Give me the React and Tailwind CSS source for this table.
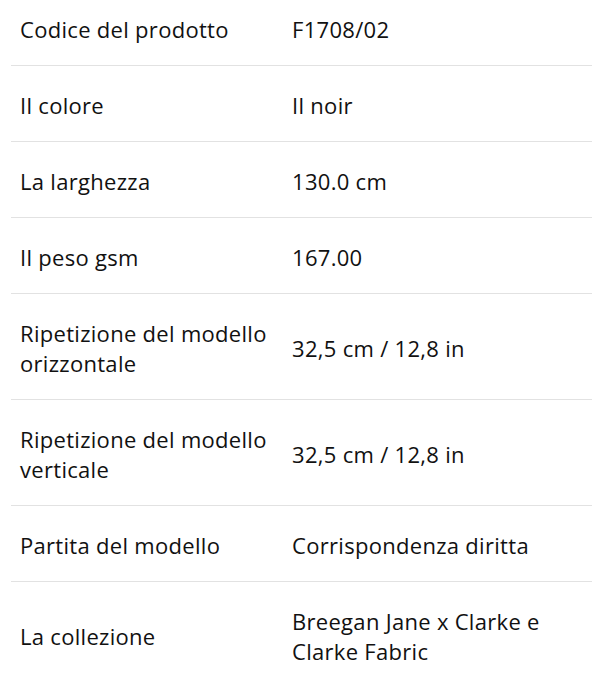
import React from "react";

const rows = [
  ["Codice del prodotto", "F1708/02"],
  ["Il colore", "Il noir"],
  ["La larghezza", "130.0 cm"],
  ["Il peso gsm", "167.00"],
  ["Ripetizione del modello orizzontale", "32,5 cm / 12,8 in"],
  ["Ripetizione del modello verticale", "32,5 cm / 12,8 in"],
  ["Partita del modello", "Corrispondenza diritta"],
  ["La collezione", "Breegan Jane x Clarke e Clarke Fabric"],
];

export default function App() {
  return (
    <div className="bg-white w-[605px] h-[695px] overflow-hidden font-['Open_Sans',sans-serif] text-[22px] tracking-[0.3px] leading-[30px] text-[#111]">
      <div className="mx-[11px] w-[581px] -mt-[10px]">
        {rows.map(([k, v], i) => (
          <div
            key={i}
            className={`grid grid-cols-[272px_1fr] items-center ${i < rows.length - 1 ? "border-b border-[#e2e2e2]" : ""}`}
          >
            <div className="pl-[9px] pr-[12px] pt-[24px] pb-[21px]">{k}</div>
            <div className="pl-[9px] pr-[12px] pt-[24px] pb-[21px]">{v}</div>
          </div>
        ))}
      </div>
    </div>
  );
}
